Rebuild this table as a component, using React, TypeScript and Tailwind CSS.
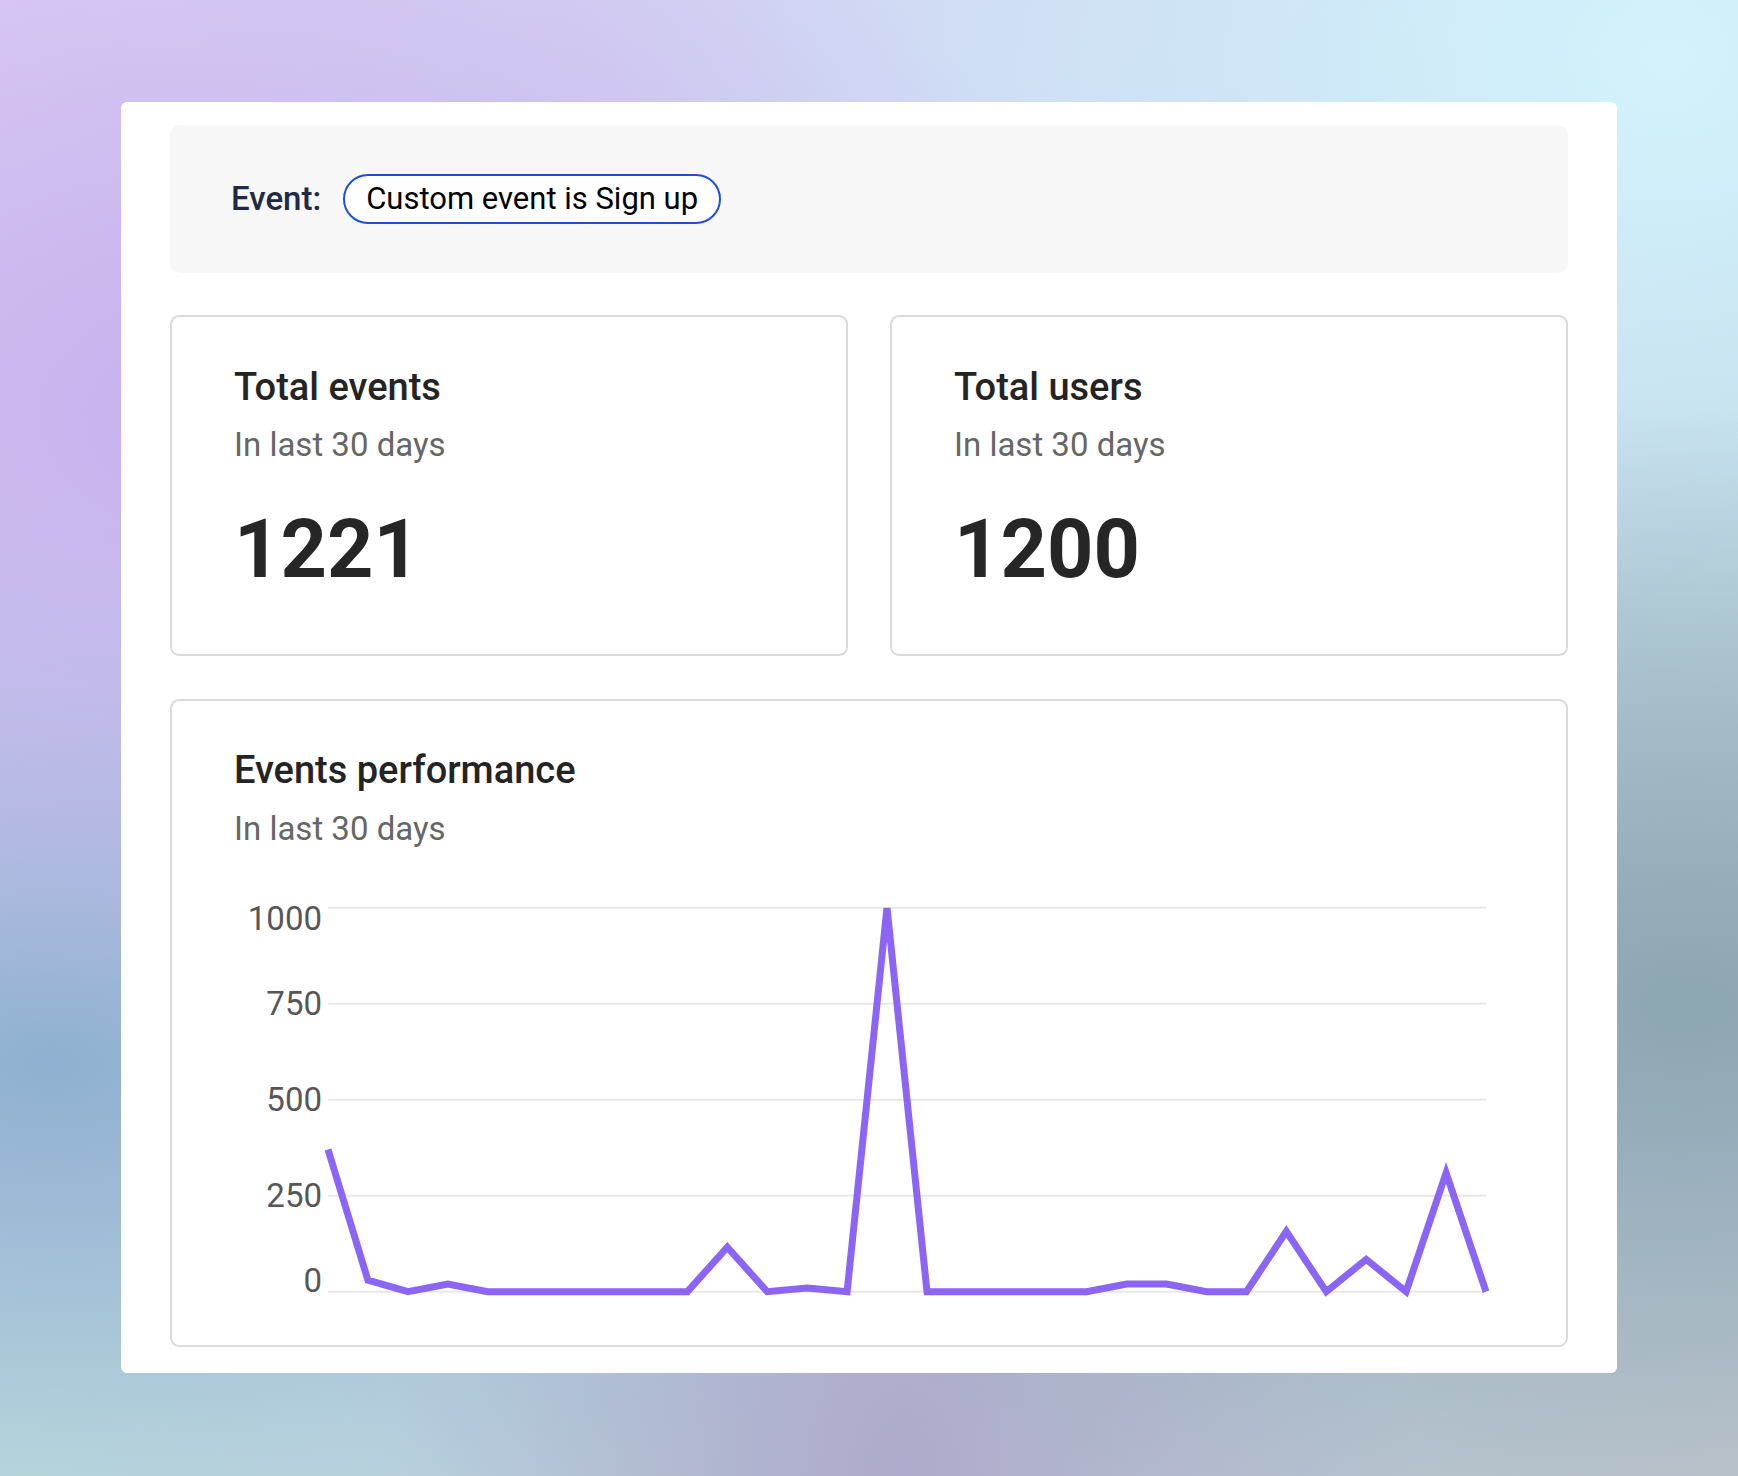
import React from "react";

const data = [370, 30, 0, 20, 0, 0, 0, 0, 0, 0, 116, 0, 10, 0, 1000, 0, 0, 0, 0, 0, 20, 20, 0, 0, 157, 0, 84, 0, 309, 0];

const X0 = 94;
const X1 = 1252;
const Y0 = 401.7; // value 0
const PER = 0.384; // px per unit

function Chart() {
  const pts = data
    .map((v, i) => {
      const x = X0 + (i * (X1 - X0)) / (data.length - 1);
      const y = Y0 - v * PER;
      return `${x.toFixed(1)},${y.toFixed(1)}`;
    })
    .join(" ");
  const ticks = [
    { v: 1000, ly: 39.6 },
    { v: 750, ly: 125.3 },
    { v: 500, ly: 221.3 },
    { v: 250, ly: 317.3 },
    { v: 0, ly: 401.5 },
  ];
  return (
    <svg width="1262" height="420" viewBox="0 0 1262 420" className="block">
      <defs>
        <clipPath id="plot">
          <rect x="80" y={Y0 - 1000 * PER} width="1190" height="400" />
        </clipPath>
      </defs>
      {ticks.map((t) => (
        <g key={t.v}>
          <line x1={X0} x2={X1} y1={Y0 - t.v * PER} y2={Y0 - t.v * PER} stroke="#e8e8e8" strokeWidth="2" />
          <text
            x="88"
            y={t.ly}
            textAnchor="end"
            fontFamily="Roboto, 'Liberation Sans', sans-serif"
            fontSize="33"
            fill="#575757"
          >
            {t.v}
          </text>
        </g>
      ))}
      <polyline
        points={pts}
        fill="none"
        stroke="#8b66f6"
        strokeWidth="7"
        strokeLinejoin="miter"
        strokeMiterlimit="10"
        clipPath="url(#plot)"
      />
    </svg>
  );
}

function StatCard({ title, value }: { title: string; value: string }) {
  return (
    <div className="h-[341px] rounded-[9px] border-2 border-[#dadada] bg-white pl-[62px] pt-[47px]">
      <div className="text-[38px] font-medium leading-[46px] text-[#242424]">{title}</div>
      <div className="mt-[15px] text-[33px] leading-[40px] text-[#666666]">In last 30 days</div>
      <div className="mt-[45px] text-[81px] font-bold leading-[80px] text-[#262626]">{value}</div>
    </div>
  );
}

export default function App() {
  return (
    <div
      className="min-h-[1476px] w-full px-[121px] pt-[102px] pb-[103px] font-['Roboto','Liberation_Sans',sans-serif] bg-[image:radial-gradient(ellipse_at_12%_28%,#c6b0ee_0%,transparent_42%),radial-gradient(ellipse_at_3%_72%,#8fb0d0_0%,transparent_38%),radial-gradient(ellipse_at_97%_68%,#8ca6b2_0%,transparent_42%),radial-gradient(ellipse_at_96%_4%,#d2f3fc_0%,transparent_45%),radial-gradient(ellipse_at_52%_100%,#aeaacb_0%,transparent_40%),radial-gradient(ellipse_at_2%_100%,#c4e2de_0%,transparent_30%),linear-gradient(135deg,#ddcff4_0%,#cbd3f0_40%,#b4cad8_70%,#c3c8d0_100%)]"
    >
      <div className="rounded-md bg-white px-[49px] pt-[23px] pb-[26px]">
        <div className="flex h-[148px] items-center rounded-[10px] bg-[#f7f7f7] pl-[61px]">
          <span className="text-[33px] font-medium leading-[40px] text-[#202a44]">Event:</span>
          <span className="ml-[22px] flex h-[50px] items-center rounded-full border-2 border-[#1a4fd6] bg-white px-[21px] text-[31px] leading-[36px] text-black">
            Custom event is Sign up
          </span>
        </div>
        <div className="mt-[42px] grid grid-cols-2 gap-[42px]">
          <StatCard title="Total events" value="1221" />
          <StatCard title="Total users" value="1200" />
        </div>
        <div className="mt-[43px] h-[648px] rounded-[9px] border-2 border-[#dadada] bg-white pl-[62px] pt-[46px]">
          <div className="text-[38px] font-medium leading-[46px] text-[#242424]">Events performance</div>
          <div className="mt-[16px] text-[33px] leading-[40px] text-[#666666]">In last 30 days</div>
          <div className="mt-[41px]">
            <Chart />
          </div>
        </div>
      </div>
    </div>
  );
}
